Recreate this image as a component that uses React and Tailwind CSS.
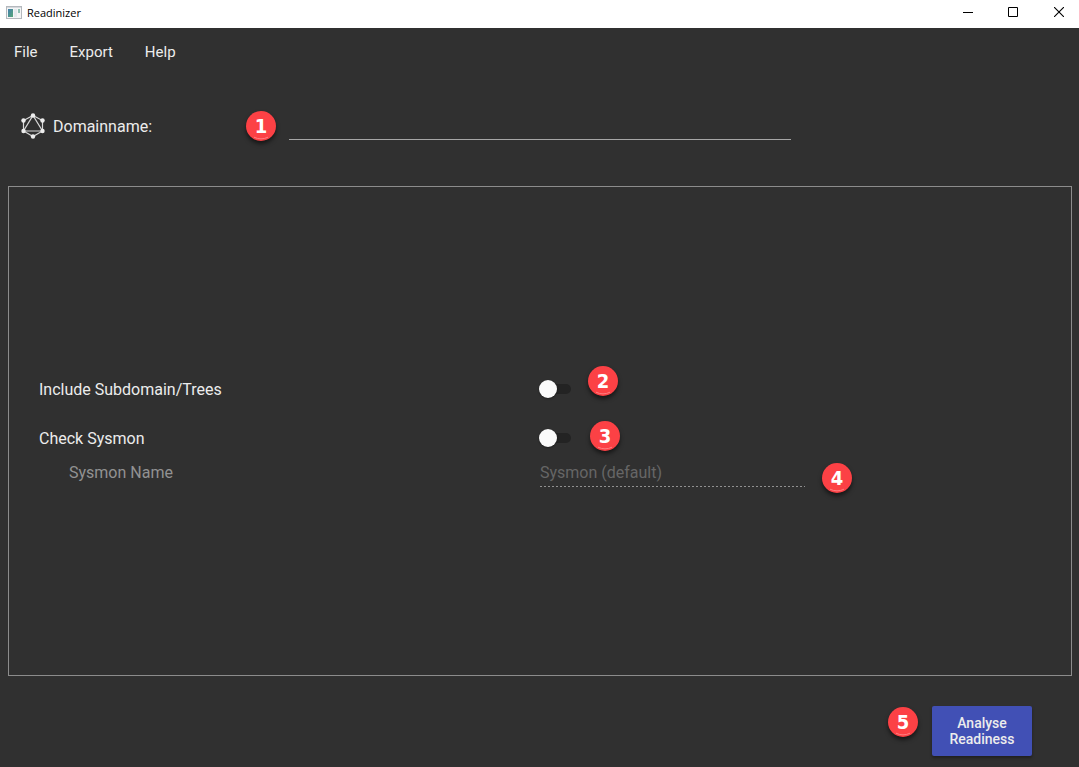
import React from "react";

function Badge({ n, className }) {
  return (
    <span
      className={`absolute flex size-[30px] items-center justify-center rounded-full bg-[#fc4145] font-['DejaVu_Sans_Condensed','DejaVu_Sans',sans-serif] text-xl leading-none font-bold text-white shadow-[0_3px_4px_rgba(0,0,0,0.55)] ${className}`}
    >
      {n}
      <svg className="absolute inset-0" width="30" height="30" viewBox="0 0 30 30" fill="none" aria-hidden="true">
        <path d="M8 26.2Q15 29.5 22 26.2" stroke="#ff7e80" strokeWidth="1" />
      </svg>
    </span>
  );
}

function Switch({ id }) {
  return (
    <span className="relative -ml-px flex h-[18px] w-8 items-center">
      <input
        id={id}
        type="checkbox"
        role="switch"
        className="peer ml-1 h-[10px] w-7 appearance-none rounded-full bg-[#232323] checked:bg-[#3f51b5]"
      />
      <span className="pointer-events-none absolute left-0 size-[18px] rounded-full bg-[#fafafa] shadow-[0_1px_2px_rgba(0,0,0,0.4)] peer-checked:left-[14px]" />
    </span>
  );
}

function AppIcon() {
  return (
    <svg width="16" height="14" viewBox="0 0 16 14" aria-hidden="true">
      <defs>
        <linearGradient id="pane" x1="0" y1="0" x2="1" y2="1">
          <stop offset="0" stopColor="#427fae" />
          <stop offset="1" stopColor="#56a777" />
        </linearGradient>
      </defs>
      <rect x="0.5" y="0.5" width="15" height="12" fill="#f4f5f6" stroke="#b4b8bd" />
      <rect x="1" y="1" width="14" height="1" fill="#d5d8dc" />
      <rect x="2" y="3" width="5" height="8" fill="url(#pane)" />
      <rect x="8" y="3" width="3" height="8" fill="#e4e9ed" />
      <rect x="12" y="3" width="2" height="4" fill="#8fc0b4" />
    </svg>
  );
}

function DomainIcon() {
  const nodes = [[12, 2.5], [21.5, 7.5], [21.5, 18], [12, 23.5], [2.5, 18], [2.5, 7.5]];
  return (
    <svg width="24" height="26" viewBox="0 0 24 26" fill="none" stroke="#d8d8d8" strokeWidth="1.2" aria-hidden="true">
      <path d="M12 2.5 21.5 7.5V18L12 23.5 2.5 18V7.5Z" />
      <path d="M12 2.5 21.5 18H2.5Z" />
      {nodes.map(([x, y]) => (
        <circle key={`${x}-${y}`} cx={x} cy={y} r="2.2" fill="#ededed" stroke="none" />
      ))}
    </svg>
  );
}

export default function App() {
  return (
    <div className="flex min-h-screen flex-col bg-[#303030] font-['Roboto',sans-serif] text-base leading-5 text-[#ececec]">
      <header className="flex h-7 items-center justify-between bg-white text-black">
        <div className="flex items-center gap-[5px] pb-0.5 pl-1.5">
          <AppIcon />
          <span className="font-['Open_Sans',sans-serif] text-[11px] leading-4">Readinizer</span>
        </div>
        <div className="flex pb-1">
          <button aria-label="Minimize" className="flex h-6 w-[45px] items-center justify-center">
            <svg width="10" height="10" viewBox="0 0 10 10" stroke="currentColor"><path d="M0 5.5H10" /></svg>
          </button>
          <button aria-label="Maximize" className="flex h-6 w-[46px] items-center justify-center">
            <svg width="10" height="10" viewBox="0 0 10 10" fill="none" stroke="currentColor"><path d="M.5.5h9v9h-9Z" /></svg>
          </button>
          <button aria-label="Close" className="flex h-6 w-[43px] items-center justify-center pl-0.5">
            <svg width="10" height="10" viewBox="0 0 10 10" stroke="currentColor" strokeWidth="1.1"><path d="M0 0 10 10M10 0 0 10" /></svg>
          </button>
        </div>
      </header>

      <nav className="flex h-12 items-center gap-8 px-[14px] text-[15px]">
        <button>File</button>
        <button>Export</button>
        <button>Help</button>
      </nav>

      <div className="relative flex h-[110px] items-start pt-[37px] pl-[21px]">
        <label htmlFor="domain" className="flex w-[268px] items-center gap-2">
          <DomainIcon />
          <span className="pt-0.5">Domainname:</span>
        </label>
        <input id="domain" className="h-[27px] w-[502px] border-b border-[#a6a6a6] bg-transparent outline-none" />
        <Badge n="1" className="top-[35px] left-[246px]" />
      </div>

      <main className="mx-2 mr-[7px] flex flex-1 flex-col justify-center border border-[#8c8c8c] pt-1">
        <div className="grid grid-cols-2 items-start">
          <label htmlFor="subdomains" className="pl-[30px]">Include Subdomain/Trees</label>
          <div className="relative">
            <Switch id="subdomains" />
            <Badge n="2" className="-top-[14px] left-12" />
          </div>
        </div>
        <div className="mt-[29px] grid grid-cols-2 items-start">
          <label htmlFor="sysmon" className="pl-[30px]">Check Sysmon</label>
          <div className="relative">
            <Switch id="sysmon" />
            <Badge n="3" className="-top-2 left-[50px]" />
          </div>
        </div>
        <div className="mt-[14px] grid grid-cols-2 items-start text-[#929292]">
          <label htmlFor="sysmon-name" className="pl-[60px]">Sysmon Name</label>
          <div className="relative">
            <input
              id="sysmon-name"
              disabled
              placeholder="Sysmon (default)"
              className="block h-5 w-[265px] bg-transparent placeholder:text-[#666666]"
            />
            <div className="mt-[3px] h-px w-[265px] bg-[repeating-linear-gradient(to_right,#909090_0_2px,transparent_2px_4px)]" />
            <Badge n="4" className="top-0 left-[282px]" />
          </div>
        </div>
      </main>

      <footer className="flex justify-end pt-[30px] pr-[47px] pb-[11px]">
        <div className="relative">
          <Badge n="5" className="top-px -left-11" />
          <button className="h-[50px] w-[100px] rounded-[2px] bg-[#4150b5] px-3 text-sm leading-4 font-medium shadow-[0_2px_3px_rgba(0,0,0,0.35)]">
            Analyse Readiness
          </button>
        </div>
      </footer>
    </div>
  );
}
